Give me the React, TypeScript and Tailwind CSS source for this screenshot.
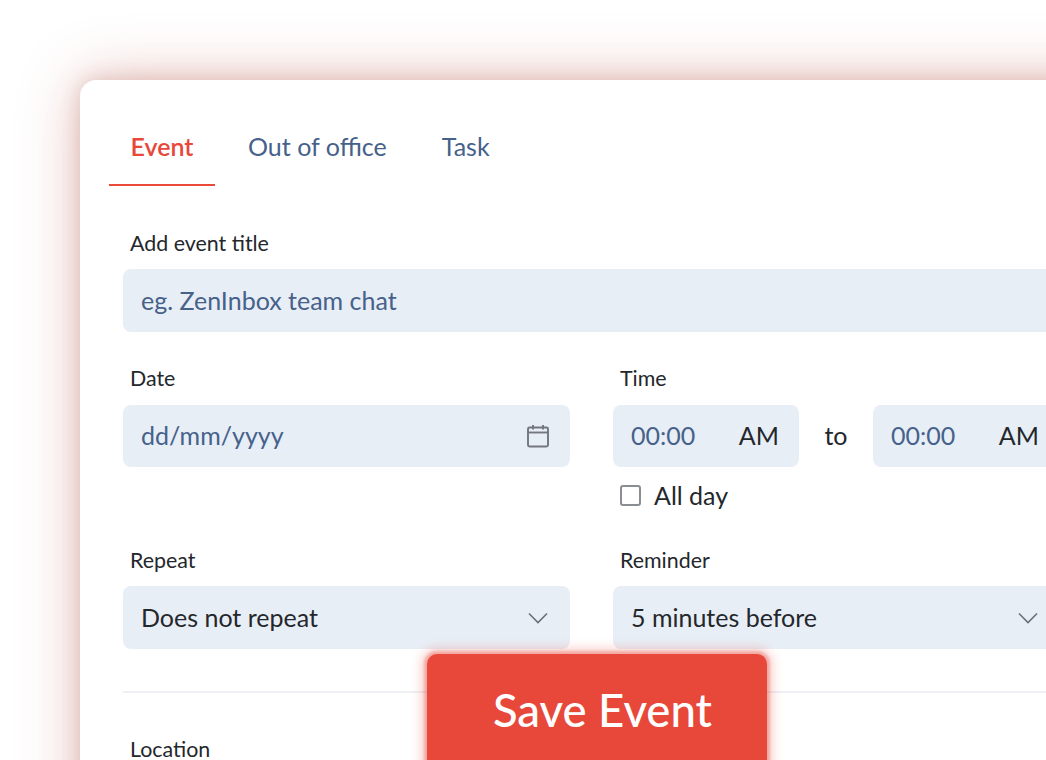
import React from "react";

function Chevron() {
  return (
    <svg width="20" height="12" viewBox="0 0 20 12" fill="none" stroke="#6b6f76" strokeWidth="1.6" className="shrink-0">
      <path d="M1 1.5 L10 10.5 L19 1.5" />
    </svg>
  );
}

function CalendarIcon() {
  return (
    <svg width="24" height="24" viewBox="0 0 24 24" fill="none" stroke="#73767c" strokeWidth="1.9" className="shrink-0">
      <rect x="2" y="3.5" width="20" height="19" rx="1.5" />
      <path d="M2 8.5 H22" />
      <path d="M7 1 V5.5 M17 1 V5.5" />
    </svg>
  );
}

function Label({ children }: { children: React.ReactNode }) {
  return <div className="pl-[7px] text-[21.4px] leading-[24px] text-[#24272b]">{children}</div>;
}

function TimeBox() {
  return (
    <div className="flex h-[62px] w-[186px] shrink-0 items-center justify-between rounded-lg bg-[#e8eef6] pl-[18px] pr-5 text-[25px]">
      <span className="text-[#46618a]">00:00</span>
      <span className="text-[#24272b]">AM</span>
    </div>
  );
}

function Select({ text, className }: { text: string; className: string }) {
  return (
    <div className={`flex h-[63px] items-center justify-between rounded-lg bg-[#e8eef6] pl-[18px] pr-[22px] text-[25px] text-[#24272b] ${className}`}>
      <span>{text}</span>
      <Chevron />
    </div>
  );
}

export default function App() {
  return (
    <div className="relative h-[760px] w-[1046px] overflow-hidden bg-white pl-20 pt-20 font-['Lato',sans-serif]">
      <div className="h-[900px] w-[1200px] rounded-tl-[16px] bg-white pl-[29px] shadow-[0_0_20px_rgba(150,60,50,0.2),0_0_60px_rgba(180,70,50,0.35)]">
        <div className="flex h-[106px] items-end gap-[11px]">
          <div className="flex h-[106px] w-[106px] items-center justify-center border-b-2 border-[#ea4a3a] pt-[29px] text-[25px] font-semibold text-[#e8473a]">
            Event
          </div>
          <div className="flex h-[106px] items-center px-[22px] pt-[28px] text-[25px] text-[#46618a]">Out of office</div>
          <div className="flex h-[106px] items-center px-[22px] pt-[28px] text-[25px] text-[#46618a]">Task</div>
        </div>

        <div className="ml-[14px] pt-[45px]">
          <Label>Add event title</Label>
          <div className="mt-[14px] flex h-[63px] w-full items-center rounded-lg bg-[#e8eef6] pl-[18px] text-[25px] text-[#46618a]">
            eg. ZenInbox team chat
          </div>

          <div className="mt-[34px] flex gap-[43px]">
            <div className="w-[447px] shrink-0">
              <Label>Date</Label>
              <div className="mt-[15px] flex h-[62px] items-center justify-between rounded-lg bg-[#e8eef6] pl-[18px] pr-5 text-[25px] text-[#46618a]">
                <span>dd/mm/yyyy</span>
                <CalendarIcon />
              </div>
            </div>
            <div>
              <Label>Time</Label>
              <div className="mt-[15px] flex items-center">
                <TimeBox />
                <div className="w-[74px] text-center text-[25px] text-[#24272b]">to</div>
                <TimeBox />
              </div>
              <div className="mt-[16px] flex items-center gap-[13px] pl-[7px]">
                <div className="h-[21px] w-[21px] rounded-[3px] border-2 border-[#8a8d92]" />
                <span className="text-[25px] leading-[24px] text-[#24272b]">All day</span>
              </div>
            </div>
          </div>

          <div className="mt-[41px] flex gap-[43px]">
            <div className="w-[447px] shrink-0">
              <Label>Repeat</Label>
              <Select text="Does not repeat" className="mt-[14px]" />
            </div>
            <div>
              <Label>Reminder</Label>
              <Select text="5 minutes before" className="mt-[14px] w-[447px]" />
            </div>
          </div>

          <div className="mt-[42px] h-[2px] bg-[#eef0f3]" />

          <div className="mt-[44px]">
            <Label>Location</Label>
          </div>
        </div>
      </div>

      <div className="absolute left-[427px] top-[654px] flex h-[150px] w-[340px] items-start justify-center rounded-[10px] bg-[#e74839] pl-[11px] pt-[28px] text-[45.5px] font-medium leading-[56px] text-white shadow-[0_0_3px_3px_rgba(231,72,57,0.35),0_0_10px_7px_rgba(231,72,57,0.2)]">
        Save Event
      </div>
    </div>
  );
}
